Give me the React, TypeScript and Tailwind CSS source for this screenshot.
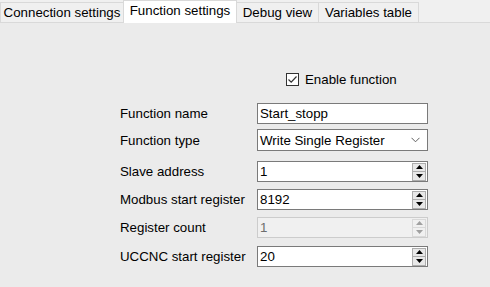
import React from "react";

function Tab({ label, w, active }: { label: string; w: string; active?: boolean }) {
  if (active) {
    return (
      <div
        className={`${w} h-[23px] -mb-px bg-white border-t border-l border-r border-[#d9d9d9] flex items-start justify-center pt-[2px] text-black z-10`}
      >
        {label}
      </div>
    );
  }
  return (
    <div
      className={`${w} h-[20px] bg-[#f0f0f0] border-t border-l border-r border-[#d9d9d9] flex items-start justify-center pt-[2px] text-black`}
    >
      {label}
    </div>
  );
}

function Spin({ disabled }: { disabled?: boolean }) {
  const c = disabled ? "#a0a0a0" : "#000";
  const btn = disabled
    ? "border-[#d9d9d9] bg-[#f0f0f0]"
    : "border-[#adadad] bg-[#e8e8e8]";
  return (
    <div className="flex flex-col gap-0 mr-[1px]">
      <div className={`w-[14px] h-[9px] border ${btn} flex items-center justify-center`}>
        <svg width="7" height="4" viewBox="0 0 7 4">
          <polygon points="3.5,0 7,4 0,4" fill={c} />
        </svg>
      </div>
      <div className={`w-[14px] h-[9px] border border-t-0 ${btn} flex items-center justify-center`}>
        <svg width="7" height="4" viewBox="0 0 7 4">
          <polygon points="0,0 7,0 3.5,4" fill={c} />
        </svg>
      </div>
    </div>
  );
}

function Row({
  label,
  children,
  mt,
}: {
  label: string;
  children: React.ReactNode;
  mt: string;
}) {
  return (
    <div className={`flex items-center ${mt}`}>
      <div className="w-[137px]">{label}</div>
      {children}
    </div>
  );
}

export default function App() {
  return (
    <div
      className="w-[490px] h-[287px] bg-[#ebebeb] text-[13.3px] leading-[15px] text-black overflow-hidden flex flex-col"
      style={{ fontFamily: "'Liberation Sans', Arial, sans-serif" }}
    >
      <div className="h-[23px] bg-[#f0f0f0] border-b border-[#d9d9d9] flex items-end shrink-0">
        <Tab label="Connection settings" w="w-[124px]" />
        <Tab label="Function settings" w="w-[114px] -ml-px" active />
        <Tab label="Debug view" w="w-[83px] -ml-px" />
        <Tab label="Variables table" w="w-[101px] -ml-px" />
      </div>

      <div className="pl-[120px] flex flex-col">
        <div className="flex items-center mt-[49px] ml-[166px]">
          <div className="w-[13px] h-[13px] border border-[#333] bg-white flex items-center justify-center">
            <svg width="11" height="11" viewBox="0 0 11 11">
              <polyline points="1.5,5.5 4.2,8.2 9.5,2.5" fill="none" stroke="#333" strokeWidth="1.2" />
            </svg>
          </div>
          <span className="ml-[6px]">Enable function</span>
        </div>

        <Row label="Function name" mt="mt-[16px]">
          <div className="w-[171px] h-[21px] border border-[#7a7a7a] bg-white flex items-center pl-[2px]">
            Start_stopp
          </div>
        </Row>

        <Row label="Function type" mt="mt-[5px]">
          <div className="w-[171px] h-[22px] border border-[#7a7a7a] bg-white flex items-center pl-[2px] justify-between">
            <span>Write Single Register</span>
            <svg width="9" height="6" viewBox="0 0 9 6" className="mr-[7px]">
              <polyline points="0.5,0.8 4.5,4.8 8.5,0.8" fill="none" stroke="#606060" strokeWidth="1" />
            </svg>
          </div>
        </Row>

        <Row label="Slave address" mt="mt-[10px]">
          <div className="w-[171px] h-[21px] border border-[#7a7a7a] bg-white flex items-center pl-[2px] justify-between">
            <span>1</span>
            <Spin />
          </div>
        </Row>

        <Row label="Modbus start register" mt="mt-[7px]">
          <div className="w-[171px] h-[21px] border border-[#7a7a7a] bg-white flex items-center pl-[2px] justify-between">
            <span>8192</span>
            <Spin />
          </div>
        </Row>

        <Row label="Register count" mt="mt-[7px]">
          <div className="w-[171px] h-[21px] border border-[#cccccc] bg-[#f0f0f0] flex items-center pl-[2px] justify-between text-[#6d6d6d]">
            <span>1</span>
            <Spin disabled />
          </div>
        </Row>

        <Row label="UCCNC start register" mt="mt-[8px]">
          <div className="w-[171px] h-[21px] border border-[#7a7a7a] bg-white flex items-center pl-[2px] justify-between">
            <span>20</span>
            <Spin />
          </div>
        </Row>
      </div>
    </div>
  );
}
